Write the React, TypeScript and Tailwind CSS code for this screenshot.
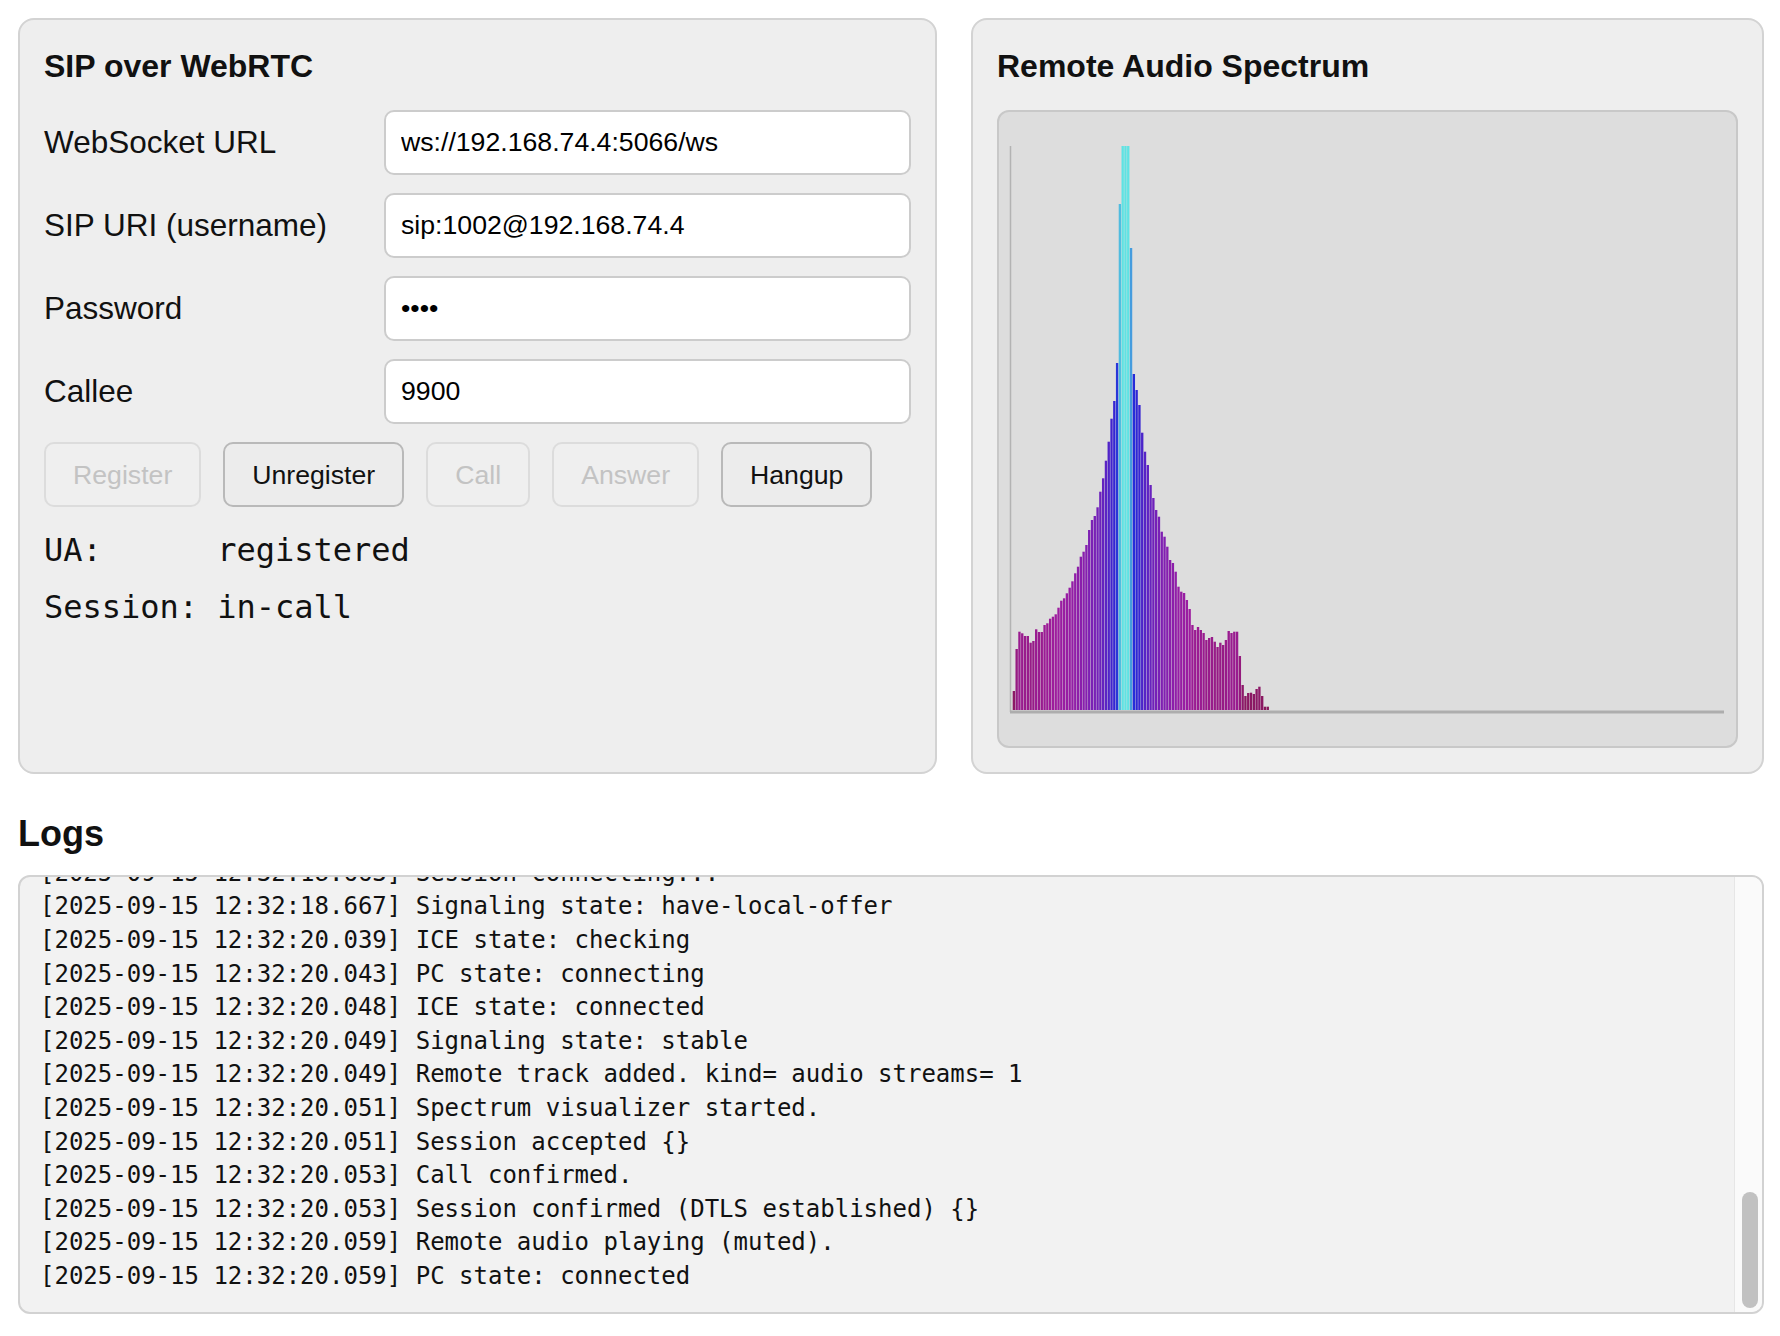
import React, { useEffect, useRef } from 'react';

// bar tops (page px) read off the spectrum, 256 bins, only the low ones are lit
const tops = [
  691, 649, 631.7, 633.3, 636, 636, 642.7, 641, 629.3, 632,
  632, 625, 623.3, 618.7, 616.7, 614.3, 607.7, 600.7, 598.3, 593.3,
  587.7, 581.3, 573.3, 566.7, 556.7, 551.7, 545, 530, 520, 516,
  507.3, 491.7, 478.3, 460.7, 441.7, 418.7, 401, 363, 204, 146,
  146, 146, 248, 374, 390, 405, 432.7, 451.7, 465, 485,
  498, 510, 516.7, 531.7, 536.7, 546.7, 560, 563, 571.7, 586.7,
  591.7, 593, 600, 609, 625, 630, 627, 630, 633, 640,
  638, 637, 641.7, 647, 642.7, 645, 640, 631, 633, 631.7,
  631.7, 656, 685, 696, 693, 692.7, 694, 689, 686.7, 696,
  706.7, 706.7,
];

const logs = [
  '[2025-09-15 12:31:40.118] Page loaded. Ready.',
  '[2025-09-15 12:31:44.302] Register clicked.',
  '[2025-09-15 12:31:44.306] Creating UA: sip:1002@192.168.74.4',
  '[2025-09-15 12:31:44.311] WebSocket connecting: ws://192.168.74.4:5066/ws',
  '[2025-09-15 12:31:44.318] UA started.',
  '[2025-09-15 12:31:44.359] WebSocket connected.',
  '[2025-09-15 12:31:44.364] Sending REGISTER ...',
  '[2025-09-15 12:31:44.398] 401 Unauthorized, retrying with credentials',
  '[2025-09-15 12:31:44.431] UA registered. expires= 600',
  '[2025-09-15 12:32:18.402] Call clicked. target= 9900',
  '[2025-09-15 12:32:18.405] Requesting microphone ...',
  '[2025-09-15 12:32:18.471] getUserMedia OK. tracks= 1',
  '[2025-09-15 12:32:18.478] Calling sip:9900@192.168.74.4',
  '[2025-09-15 12:32:18.483] New RTC session (outgoing)',
  '[2025-09-15 12:32:18.486] PeerConnection created.',
  '[2025-09-15 12:32:18.490] Local track added. kind= audio',
  '[2025-09-15 12:32:18.502] ICE gathering state: gathering',
  '[2025-09-15 12:32:18.511] ICE candidate: host udp 192.168.74.20',
  '[2025-09-15 12:32:18.518] ICE candidate: host tcp 192.168.74.20',
  '[2025-09-15 12:32:18.553] ICE gathering state: complete',
  '[2025-09-15 12:32:18.559] Local SDP ready.',
  '[2025-09-15 12:32:18.566] Sending INVITE ...',
  '[2025-09-15 12:32:18.601] 100 Trying',
  '[2025-09-15 12:32:18.612] 180 Ringing',
  '[2025-09-15 12:32:18.618] Session progress.',
  '[2025-09-15 12:32:18.633] 200 OK received',
  '[2025-09-15 12:32:18.639] Remote SDP applied.',
  '[2025-09-15 12:32:18.644] Sending ACK',
  '[2025-09-15 12:32:18.650] DTLS handshake started.',
  '[2025-09-15 12:32:18.655] Session connecting...',
  '[2025-09-15 12:32:18.663] Session connecting...',
  '[2025-09-15 12:32:18.667] Signaling state: have-local-offer',
  '[2025-09-15 12:32:20.039] ICE state: checking',
  '[2025-09-15 12:32:20.043] PC state: connecting',
  '[2025-09-15 12:32:20.048] ICE state: connected',
  '[2025-09-15 12:32:20.049] Signaling state: stable',
  '[2025-09-15 12:32:20.049] Remote track added. kind= audio streams= 1',
  '[2025-09-15 12:32:20.051] Spectrum visualizer started.',
  '[2025-09-15 12:32:20.051] Session accepted {}',
  '[2025-09-15 12:32:20.053] Call confirmed.',
  '[2025-09-15 12:32:20.053] Session confirmed (DTLS established) {}',
  '[2025-09-15 12:32:20.059] Remote audio playing (muted).',
  '[2025-09-15 12:32:20.059] PC state: connected',
];

const fields = [
  { label: 'WebSocket URL', value: 'ws://192.168.74.4:5066/ws', type: 'text' },
  { label: 'SIP URI (username)', value: 'sip:1002@192.168.74.4', type: 'text' },
  { label: 'Password', value: '1234', type: 'password' },
  { label: 'Callee', value: '9900', type: 'text' },
];

const buttons = [
  { label: 'Register', disabled: true },
  { label: 'Unregister', disabled: false },
  { label: 'Call', disabled: true },
  { label: 'Answer', disabled: true },
  { label: 'Hangup', disabled: false },
];

const Spectrum = () => {
  const base = 598;
  const maxH = base - 34;
  return (
    <svg viewBox="0 0 737 634" className="block h-full w-full" preserveAspectRatio="xMinYMin meet">
      <line x1="11.5" y1="34" x2="11.5" y2="600" stroke="#b3b3b3" strokeWidth="1.5" />
      {tops.map((t, i) => {
        const y = t - 112;
        const h = base - y;
        const v = Math.min(1, h / maxH);
        const hue = 325 - v * 145;
        const light = 31 + v * 32;
        return (
          <rect
            key={i}
            x={13.7 + i * 2.79}
            y={y}
            width={2.35}
            height={h}
            fill={`hsl(${hue.toFixed(1)}, 70%, ${light.toFixed(1)}%)`}
          />
        );
      })}
      <line x1="11" y1="600" x2="725" y2="600" stroke="#adadad" strokeWidth="3" />
    </svg>
  );
};

export default function App() {
  const logRef = useRef<HTMLDivElement>(null);

  // keep the log pinned to its newest line
  useEffect(() => {
    if (logRef.current) logRef.current.scrollTop = logRef.current.scrollHeight;
  }, []);

  return (
    <div className="min-h-screen bg-white pl-[18px] pr-[16px] pt-[18px] pb-[23px] font-['Liberation_Sans',Arial,sans-serif] text-[#111]">
      <div className="grid grid-cols-[919px_1fr] gap-[34px]">
        {/* SIP panel */}
        <section className="rounded-[16px] border-2 border-[#d3d3d3] bg-[#eeeeee] px-[24px] pt-[30px] pb-[24px]">
          <h2 className="text-[32px] font-bold leading-[32px]">SIP over WebRTC</h2>

          <div className="mt-[28px] grid grid-cols-[320px_1fr] items-center gap-x-[20px] gap-y-[18px]">
            {fields.map((f) => (
              <React.Fragment key={f.label}>
                <label className="text-[31.5px] leading-[37px]">{f.label}</label>
                <input
                  type={f.type}
                  defaultValue={f.value}
                  className="h-[65px] w-full rounded-[10px] border-2 border-[#cccccc] bg-white px-[15px] text-[26.67px] text-black outline-none"
                />
              </React.Fragment>
            ))}
          </div>

          <div className="mt-[18px] flex gap-[22px]">
            {buttons.map((b) => (
              <button
                key={b.label}
                disabled={b.disabled}
                className={`h-[65px] rounded-[10px] border-2 px-[27px] text-[26.67px] ${
                  b.disabled
                    ? 'border-[#dcdcdc] bg-[#efefef] text-[#c3c3c3]'
                    : 'border-[#b9b9b9] bg-[#ececec] text-[#111]'
                }`}
              >
                {b.label}
              </button>
            ))}
          </div>

          <div className="mt-[25px] grid grid-cols-[auto_1fr] gap-x-[19px] gap-y-[20px] font-['DejaVu_Sans_Mono',monospace] text-[32px] leading-[37px]">
            <span>UA:</span>
            <span>registered</span>
            <span>Session:</span>
            <span>in-call</span>
          </div>
        </section>

        {/* Spectrum panel */}
        <section className="rounded-[16px] border-2 border-[#d3d3d3] bg-[#eeeeee] px-[24px] pt-[30px] pb-[24px]">
          <h2 className="text-[32px] font-bold leading-[32px]">Remote Audio Spectrum</h2>
          <div className="mt-[28px] h-[638px] overflow-hidden rounded-[12px] border-2 border-[#c8c8c8] bg-[#dddddd]">
            <Spectrum />
          </div>
        </section>
      </div>

      <h3 className="mt-[42px] mb-[23px] text-[36px] font-bold leading-[36px]">Logs</h3>
      <div className="flex h-[439px] overflow-hidden rounded-[12px] border-2 border-[#d2d2d2] bg-[#f2f2f2]">
        <div
          ref={logRef}
          className="flex-1 overflow-hidden pl-[20px] pr-[16px] pt-[20px] pb-[18px] font-['DejaVu_Sans_Mono',monospace] text-[24px] leading-[33.6px] text-[#111]"
        >
          {logs.map((line, i) => (
            <div key={i} className="whitespace-pre">
              {line}
            </div>
          ))}
        </div>
        {/* scrollbar */}
        <div className="flex w-[28px] flex-col justify-end border-l border-[#e6e6e6] bg-[#fafafa] pl-[7px] pr-[4px] pb-[4px]">
          <div className="h-[116px] rounded-full bg-[#c1c1c1]" />
        </div>
      </div>
    </div>
  );
}
